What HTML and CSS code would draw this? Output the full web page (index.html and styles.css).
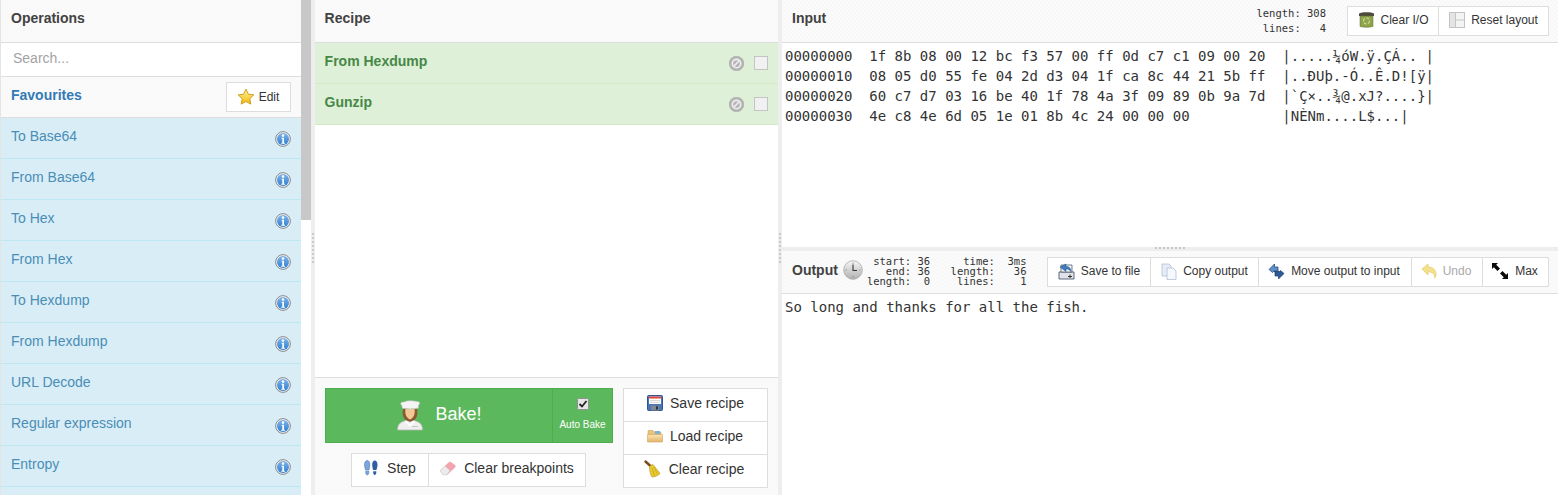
FILE: index.html
```html
<!DOCTYPE html>
<html lang="en">
<head>
<meta charset="utf-8">
<title>CyberChef</title>
<link rel="stylesheet" href="styles.css">
</head>
<body>
<svg class="defs" width="0" height="0" aria-hidden="true">
  <defs>
    <linearGradient id="gInfo" x1="0" y1="0" x2="0" y2="1"><stop offset="0" stop-color="#7fb4ea"/><stop offset="1" stop-color="#2f7fd2"/></linearGradient>
    <linearGradient id="gStar" x1="0" y1="0" x2="0" y2="1"><stop offset="0" stop-color="#fff3a0"/><stop offset="1" stop-color="#f2b90c"/></linearGradient>
    <linearGradient id="gClock" x1="0" y1="0" x2="0" y2="1"><stop offset="0" stop-color="#f6f6f6"/><stop offset="1" stop-color="#b0b0b0"/></linearGradient>
    <linearGradient id="gFolder" x1="0" y1="0" x2="0" y2="1"><stop offset="0" stop-color="#fbe6b4"/><stop offset="1" stop-color="#e3b36a"/></linearGradient>
    <symbol id="info" viewBox="0 0 16 16">
      <circle cx="8" cy="8" r="7.4" fill="#eee" stroke="#8a8a8a" stroke-width="1"/>
      <circle cx="8" cy="8" r="6" fill="url(#gInfo)"/>
      <circle cx="8" cy="4.6" r="1.3" fill="#fff"/>
      <path d="M6.6 6.8h2.4v5h1v1H6.2v-1h1.1V7.8h-.7z" fill="#fff"/>
    </symbol>
    <symbol id="ban" viewBox="0 0 14 14">
      <circle cx="7" cy="7" r="6.8" fill="#b5b5b5" stroke="#a0a0a0" stroke-width=".5"/>
      <circle cx="7" cy="7" r="3.900" fill="none" stroke="#eeeeee" stroke-width="1.500"/>
      <path d="M4.200 9.800l5.600-5.600" stroke="#eeeeee" stroke-width="1.500"/>
    </symbol>
  </defs>
</svg>

<div class="ops-pane">
  <div class="ops-main">
    <div class="pane-head"><h2 class="pane-title">Operations</h2></div>
    <div class="search">Search...</div>
    <div class="fav-row">
      <span class="fav-title">Favourites</span>
      <button class="btn btn-edit">
        <svg class="ic" width="18" height="18" viewBox="0 0 18 18"><path d="M9 1.200l2.400 5 5.400.7-4 3.800 1 5.400L9 13.500l-4.800 2.600 1-5.400-4-3.800 5.400-.7z" fill="url(#gStar)" stroke="#c9960c" stroke-width=".9" stroke-linejoin="round"/></svg>
        Edit
      </button>
    </div>
    <ul class="op-list">
      <li class="op"><span>To Base64</span><svg class="op-info"><use href="#info"/></svg></li>
      <li class="op"><span>From Base64</span><svg class="op-info"><use href="#info"/></svg></li>
      <li class="op"><span>To Hex</span><svg class="op-info"><use href="#info"/></svg></li>
      <li class="op"><span>From Hex</span><svg class="op-info"><use href="#info"/></svg></li>
      <li class="op"><span>To Hexdump</span><svg class="op-info"><use href="#info"/></svg></li>
      <li class="op"><span>From Hexdump</span><svg class="op-info"><use href="#info"/></svg></li>
      <li class="op"><span>URL Decode</span><svg class="op-info"><use href="#info"/></svg></li>
      <li class="op"><span>Regular expression</span><svg class="op-info"><use href="#info"/></svg></li>
      <li class="op"><span>Entropy</span><svg class="op-info"><use href="#info"/></svg></li>
      <li class="op"></li>
    </ul>
  </div>
  <div class="scrollbar"><div class="thumb"></div></div>
</div>

<div class="gutter"><span class="grip"></span></div>

<div class="recipe-pane">
  <div class="pane-head"><h2 class="pane-title">Recipe</h2></div>
  <ul class="rec-list">
    <li class="rec"><span>From Hexdump</span><svg class="rec-ban"><use href="#ban"/></svg><span class="rec-check"></span></li>
    <li class="rec"><span>Gunzip</span><svg class="rec-ban"><use href="#ban"/></svg><span class="rec-check"></span></li>
  </ul>
  <div class="controls">
    <div class="bake-col">
      <div class="bake">
        <div class="bake-main">
          <svg class="chef" width="28" height="32" viewBox="0 0 28 32">
            <path d="M1.500 30c0-6 3-8 8.500-9.500h8c5.500 1.500 8.500 3.500 8.500 9.500z" fill="#efefef" stroke="#b5b5b5" stroke-width=".7"/>
            <path d="M7 9h14c1 5 0 9-3 11l-4 2-4-2C7 18 6 14 7 9z" fill="#8a5a32"/>
            <path d="M9.500 9h9c.8 4.500-.5 8.500-4.500 10.500C10 17.500 8.700 13.500 9.500 9z" fill="#f2c995"/>
            <path d="M10 20.500l4 3.500 4-3.500 1 2-5 4-5-4z" fill="#fff"/>
            <path d="M6 8V5.500C3.500 4 5 1.500 8 2c3-1.800 9-1.500 13-.5 3 0 3.500 2.500 1.500 3.500V8c-5 1.200-12 1.200-16.500 0z" fill="#f4f4f4" stroke="#bdbdbd" stroke-width=".6"/>
            <path d="M16 26.500h6" stroke="#bdbdbd" stroke-width=".8"/>
          </svg>
          <span class="bake-label">Bake!</span>
        </div>
        <label class="auto">
          <span class="auto-box"><svg width="12" height="12" viewBox="0 0 12 12"><rect x=".5" y=".5" width="11" height="11" rx="1" fill="#e6e6e6" stroke="#8f8f8f"/><path d="M2.500 6l2.500 2.500 4.500-5.500" fill="none" stroke="#222" stroke-width="1.800"/></svg></span>
          <span>Auto Bake</span>
        </label>
      </div>
      <div class="btn-group step-group">
        <button class="btn btn-md btn-step">
          <svg class="ic" width="16" height="16" viewBox="0 0 16 16">
            <path d="M1.500 5c0-3 1-4.500 2.700-4.500S6.800 2 6.800 5 6 8.500 6 10H2.500C2.500 8.500 1.500 8 1.500 5z" fill="#7ca6da" stroke="#3d6cae" stroke-width=".5"/>
            <path d="M2.700 11.200h3.100v1.600c0 1-.6 2.200-1.500 2.200s-1.600-1.200-1.600-2.200z" fill="#7ca6da" stroke="#3d6cae" stroke-width=".5"/>
            <path d="M9.200 5c0-3 1-4.500 2.600-4.500S14.500 2 14.500 5c0 3-1 3.500-1 5H10c0-1.500-.8-2-.8-5z" fill="#2f5ea5"/>
            <path d="M10.200 11.200h3.100v1.600c0 1-.7 2.200-1.600 2.200s-1.500-1.200-1.500-2.200z" fill="#2f5ea5"/>
          </svg>
          Step
        </button>
        <button class="btn btn-md">
          <svg class="ic" width="18" height="16" viewBox="0 0 18 16">
            <path d="M1 10.500L9.500 2.500c1-1 2-1 3 0l3.500 2.500c.8.800.8 1.800 0 2.500L8 15H4z" fill="#f2a5ad"/>
            <path d="M1 10.500L6 6l5 4.500L7.500 15H4z" fill="#ececec" stroke="#c7c7c7" stroke-width=".5"/>
          </svg>
          Clear breakpoints
        </button>
      </div>
    </div>
    <div class="btn-stack">
      <button class="btn btn-md">
        <svg class="ic" width="16" height="16" viewBox="0 0 16 16">
          <rect x=".5" y=".5" width="15" height="15" rx="1" fill="#4a76b8" stroke="#2f5593"/>
          <rect x="2" y="1.500" width="12" height="7.500" fill="#fff"/>
          <rect x="2" y="1.500" width="12" height="2" fill="#e0453a"/>
          <path d="M3 5.500h10M3 7.300h10" stroke="#c9c9c9" stroke-width=".7"/>
          <rect x="4" y="10.500" width="8" height="5" fill="#7d8691"/>
          <rect x="9" y="11.300" width="2" height="3.200" fill="#2d3640"/>
        </svg>
        Save recipe
      </button>
      <button class="btn btn-md btn-tight">
        <svg class="ic" width="16" height="14" viewBox="0 0 16 14">
          <path d="M1 3V1.500h5L7.500 3H14v3H1z" fill="#e9c27e" stroke="#c89c55" stroke-width=".5"/>
          <path d="M8 2h5v3H8z" fill="#7fb0d8"/>
          <path d="M.5 13V5.500h15V13z" fill="url(#gFolder)" stroke="#cfa562" stroke-width=".6"/>
        </svg>
        Load recipe
      </button>
      <button class="btn btn-md btn-tighter">
        <svg class="ic" width="18" height="18" viewBox="0 0 18 18">
          <path d="M1.500 1.500L7 6.500" stroke="#7a4a1e" stroke-width="2.400" stroke-linecap="round"/>
          <path d="M5.500 6L9 4.500l7 9c-2 2-5 3.500-8 3.500-1.500-2-2.500-6-2.500-11z" fill="#e9c92f" stroke="#b0931a" stroke-width=".6"/>
          <path d="M8 8l2.500 8M10 7l3.500 7" stroke="#b0931a" stroke-width=".5"/>
        </svg>
        Clear recipe
      </button>
    </div>
  </div>
</div>

<div class="gutter"><span class="grip"></span></div>

<div class="io-pane">
  <section class="input-sec">
    <div class="pane-head io-head">
      <h2 class="pane-title">Input</h2>
      <div class="spacer"></div>
      <pre class="stats stats-input">length: 308
 lines:   4</pre>
      <div class="btn-group io-btns">
        <button class="btn btn-sm">
          <svg class="ic" width="17" height="17" viewBox="0 0 17 17">
            <path d="M1 2.500C4 .8 13 .8 16 2.500V5H1z" fill="#4c4a3a"/>
            <path d="M2 5h13v10.500c-3 1-10 1-13 0z" fill="#8fa34b" stroke="#5f6d2e" stroke-width=".5"/>
            <circle cx="8.500" cy="10" r="3" fill="none" stroke="#cdd89a" stroke-width="1.200" stroke-dasharray="3 1.500"/>
          </svg>
          Clear I/O
        </button>
        <button class="btn btn-sm">
          <svg class="ic" width="16" height="16" viewBox="0 0 16 16">
            <rect x=".5" y=".5" width="15" height="15" fill="#f4f4f4" stroke="#c4c4c4"/>
            <rect x="1" y="1" width="5.500" height="14" fill="#e4e4e4"/>
            <path d="M6.500 1v14M6.500 8H15" stroke="#c4c4c4"/>
          </svg>
          Reset layout
        </button>
      </div>
    </div>
    <pre class="mono-text">00000000  1f 8b 08 00 12 bc f3 57 00 ff 0d c7 c1 09 00 20  |.....¼óW.ÿ.ÇÁ.. |
00000010  08 05 d0 55 fe 04 2d d3 04 1f ca 8c 44 21 5b ff  |..ÐUþ.-Ó..Ê.D![ÿ|
00000020  60 c7 d7 03 16 be 40 1f 78 4a 3f 09 89 0b 9a 7d  |`Ç×..¾@.xJ?....}|
00000030  4e c8 4e 6d 05 1e 01 8b 4c 24 00 00 00           |NÈNm....L$...|</pre>
  </section>
  <div class="h-gutter"><span class="h-grip"></span></div>
  <section class="output-sec">
    <div class="pane-head io-head out-head">
      <h2 class="pane-title">Output</h2>
      <svg class="clock" width="20" height="20" viewBox="0 0 20 20">
        <circle cx="10" cy="10" r="9.300" fill="url(#gClock)" stroke="#a8a8a8" stroke-width=".8"/>
        <path d="M10 2.500v1.500M10 16v1.500M2.500 10H4M16 10h1.500" stroke="#8a8a8a" stroke-width=".8"/>
        <path d="M10 4.500V10.500H14" fill="none" stroke="#333" stroke-width="1.100"/>
      </svg>
      <pre class="stats stats-out"> start: 36
   end: 36
length:  0</pre>
      <pre class="stats stats-out stats-gap">  time:  3ms
length:   36
 lines:    1</pre>
      <div class="spacer"></div>
      <div class="btn-group">
        <button class="btn btn-sm">
          <svg class="ic" width="17" height="17" viewBox="0 0 17 17">
            <path d="M1 9h15v7H1z" fill="#dfe3e8" stroke="#3c4a5e" stroke-width=".8"/>
            <path d="M3 2h11v7H3z" fill="#f3f5f8" stroke="#3c4a5e" stroke-width=".7"/>
            <path d="M2 4l6-3v2.500c3 0 5 1.500 5 5-1.500-2-3-2.500-5-2.500v2.500z" fill="#3f7dbd" stroke="#234e80" stroke-width=".5"/>
            <path d="M10 13.500h4M12 11.500v3.500" stroke="#333" stroke-width="1"/>
          </svg>
          Save to file
        </button>
        <button class="btn btn-sm">
          <svg class="ic" width="16" height="17" viewBox="0 0 16 17">
            <path d="M1 1h7l2 2v10H1z" fill="#e7edf6" stroke="#a9b8cd" stroke-width=".7"/>
            <path d="M6 5h6l3 3v8.500H6z" fill="#f5f8fc" stroke="#a9b8cd" stroke-width=".7"/>
          </svg>
          Copy output
        </button>
        <button class="btn btn-sm btn-shift">
          <svg class="ic" width="17" height="17" viewBox="0 0 17 17">
            <path d="M1 6.500L6.500 1v3h3.500v5H6.500v-1.500L4.500 9.500z" fill="#5f8fc9" stroke="#1e3d6d" stroke-width=".7" stroke-linejoin="round"/>
            <path d="M16 10.500L10.500 16v-3H7V8h3.500v1.500l2-2z" fill="#2f5a98" stroke="#1e3d6d" stroke-width=".7" stroke-linejoin="round"/>
          </svg>
          Move output to input
        </button>
        <button class="btn btn-sm btn-off btn-shift">
          <svg class="ic" width="16" height="16" viewBox="0 0 16 16">
            <path d="M1 6l6-5v3c5 0 8 3 8 7.500 0 1.500-.5 3-1.500 3.500.5-4-2-6.500-6.500-6v3z" fill="#f5e08e" stroke="#e3c962" stroke-width=".7"/>
          </svg>
          Undo
        </button>
        <button class="btn btn-sm btn-shift">
          <svg class="ic" width="18" height="18" viewBox="0 0 18 18">
            <path d="M1 1h6L5.200 2.800 9 6.500 6.500 9 2.800 5.200 1 7zM17 17h-6l1.800-1.800L9 11.500 11.500 9l3.700 3.800L17 11z" fill="#0b0b0b"/>
          </svg>
          Max
        </button>
      </div>
    </div>
    <pre class="mono-text">So long and thanks for all the fish.</pre>
  </section>
</div>
</body>
</html>
```
FILE: styles.css
```css
* { box-sizing: border-box; }
html, body { margin: 0; height: 100%; }
body {
  display: flex;
  height: 495px;
  overflow: hidden;
  background: #fff;
  color: #333;
  font-family: "Liberation Sans", Arial, sans-serif;
  font-size: 14px;
}
.defs { position: absolute; }
ul { list-style: none; margin: 0; padding: 0; }
pre { margin: 0; }

.pane-head {
  height: 43px;
  flex: none;
  display: flex;
  align-items: center;
  padding: 0 10px;
  background: repeating-conic-gradient(#fbfbfb 0 25%, #f8f8f8 0 50%) 0 0 / 4px 4px;
  border-bottom: 1px solid #ddd;
}
.pane-title { margin: 0 0 7px; font-size: 14px; font-weight: 700; color: #424242; }

.gutter {
  width: 4px;
  flex: none;
  background: #eee;
  display: flex;
  align-items: center;
}
.grip {
  width: 2px;
  height: 30px;
  margin-left: 1px;
  background: repeating-linear-gradient(#c9c9c9 0 2px, transparent 2px 4px);
}

/* Operations */
.ops-pane { width: 311px; flex: none; display: flex; overflow: hidden; }
.ops-main { width: 301px; flex: none; border-left: 1px solid #e4e4e4; }
.search {
  height: 34px;
  padding: 6px 12px 0;
  color: #a3a3a3;
  border-bottom: 1px solid #ddd;
  line-height: 18px;
}
.fav-row {
  height: 41px;
  display: flex;
  align-items: center;
  justify-content: space-between;
  padding: 0 10px;
  background: repeating-conic-gradient(#fbfbfb 0 25%, #f8f8f8 0 50%) 0 0 / 4px 4px;
  border-bottom: 1px solid #ddd;
}
.fav-title { font-weight: 700; color: #337ab7; margin-bottom: 4px; }
.op-list { display: flex; flex-direction: column; }
.op {
  height: 41px;
  flex: none;
  display: flex;
  align-items: center;
  justify-content: space-between;
  padding: 0 10px;
  background: #d9edf7;
  border-bottom: 1px solid #bce8f1;
  color: #4a8db5;
}
.op span { margin-bottom: 5px; }
.op-info { width: 16px; height: 16px; margin-top: 1px; }
.scrollbar { width: 10px; flex: none; background: #fff; }
.thumb { height: 220px; background: #c8c8c8; }

/* Buttons */
.btn {
  display: flex;
  align-items: center;
  justify-content: center;
  border: 1px solid #ddd;
  background: #fff;
  color: #333;
  font-family: inherit;
  padding: 0;
  white-space: nowrap;
}
.ic { flex: none; }
.btn-edit { width: 65px; height: 30px; font-size: 12px; gap: 4px; padding-right: 1px; }
.btn-md { font-size: 14px; gap: 7px; padding-bottom: 4px; }
.btn-step { gap: 8px; }
.btn-tight { padding-right: 1px; }
.btn-tighter { padding-right: 3px; }
.btn-sm { font-size: 12px; gap: 6px; height: 30px; padding: 0 10px 2px; }
.btn-shift { padding: 0 11px 2px 9px; }
.btn-off { color: #a9a9a9; }
.btn-group { display: flex; }
.btn-group .btn + .btn { margin-left: -1px; }

/* Recipe */
.recipe-pane { width: 463px; flex: none; display: flex; flex-direction: column; }
.recipe-pane .pane-head { padding-left: 9.6px; }
.rec-list { flex: 1; }
.rec {
  height: 41px;
  display: flex;
  align-items: center;
  padding: 0 10px 0 9.6px;
  background: #dff0d8;
  border-bottom: 1px solid #d6e9c6;
  color: #468847;
  font-weight: 700;
}
.rec > span:first-child { flex: 1; margin-bottom: 4px; }
.rec-ban { width: 15px; height: 15px; margin-right: 10px; }
.rec-check { width: 14px; height: 14px; background: #f1f1f1; border: 1px solid #c4c4c4; }

.controls {
  height: 118px;
  flex: none;
  display: flex;
  gap: 10px;
  padding: 10px 10px 0;
  background: repeating-conic-gradient(#fbfbfb 0 25%, #f8f8f8 0 50%) 0 0 / 4px 4px;
  border-top: 1px solid #ddd;
}
.bake-col { width: 288px; flex: none; display: flex; flex-direction: column; align-items: center; gap: 10px; }
.bake {
  width: 288px;
  height: 55px;
  flex: none;
  display: flex;
  background: #5cb85c;
  border: 1px solid #4cae4c;
  color: #fff;
}
.bake-main {
  flex: 1;
  display: flex;
  align-items: center;
  justify-content: center;
  gap: 11px;
  font-size: 18px;
  border-right: 1px solid #4cae4c;
}
.bake-label { margin-bottom: 2px; }
.chef { margin-top: 1px; }
.auto {
  width: 59px;
  flex: none;
  display: flex;
  flex-direction: column;
  align-items: center;
  font-size: 10px;
}
.auto-box { height: 12px; margin: 9px 0 9px; }
.step-group { height: 34px; margin-right: 2px; }
.step-group .btn:first-child { width: 78px; }
.step-group .btn:last-child { width: 158px; }
.btn-stack { width: 145px; height: 100px; flex: none; display: flex; flex-direction: column; }
.btn-stack .btn { height: 34px; }
.btn-stack .btn + .btn { margin-top: -1px; }

/* IO */
.io-pane { flex: 1; display: flex; flex-direction: column; min-width: 0; }
.input-sec { height: 247px; flex: none; }
.io-head { padding: 0 9px 0 10px; }
.io-btns { margin-bottom: 1px; }
.spacer { flex: 1; }
.stats {
  font-family: "DejaVu Sans Mono", monospace;
  font-size: 10.5px;
  color: #333;
}
.stats-input { line-height: 15px; margin: 0 21px 1px 0; }
.mono-text {
  font-family: "DejaVu Sans Mono", monospace;
  font-size: 14px;
  line-height: 20px;
  color: #333;
  padding: 3px 3px;
}
.h-gutter {
  height: 4px;
  flex: none;
  background: #eee;
  display: flex;
  justify-content: center;
}
.h-grip {
  width: 30px;
  height: 2px;
  background: repeating-linear-gradient(90deg, #c9c9c9 0 2px, transparent 2px 4px);
}
.output-sec { flex: 1; min-height: 0; }
.out-head { height: 43px; }
.out-head .pane-title { margin: 0 0 4px; }
.clock { margin: 0 0 4px 5px; flex: none; }
.stats-out { line-height: 10px; margin: 0 0 2px 4px; }
.stats-gap { margin-left: 20.5px; }
.out-head .btn-sm:nth-child(1) { width: 104px; }
.out-head .btn-sm:nth-child(2) { width: 109px; }
.out-head .btn-sm:nth-child(3) { width: 154px; }
.out-head .btn-sm:nth-child(4) { width: 72px; }
.out-head .btn-sm:nth-child(5) { width: 67px; }
.input-sec .io-btns .btn-sm:nth-child(1) { width: 92px; }
.input-sec .io-btns .btn-sm:nth-child(2) { width: 111px; }
```
